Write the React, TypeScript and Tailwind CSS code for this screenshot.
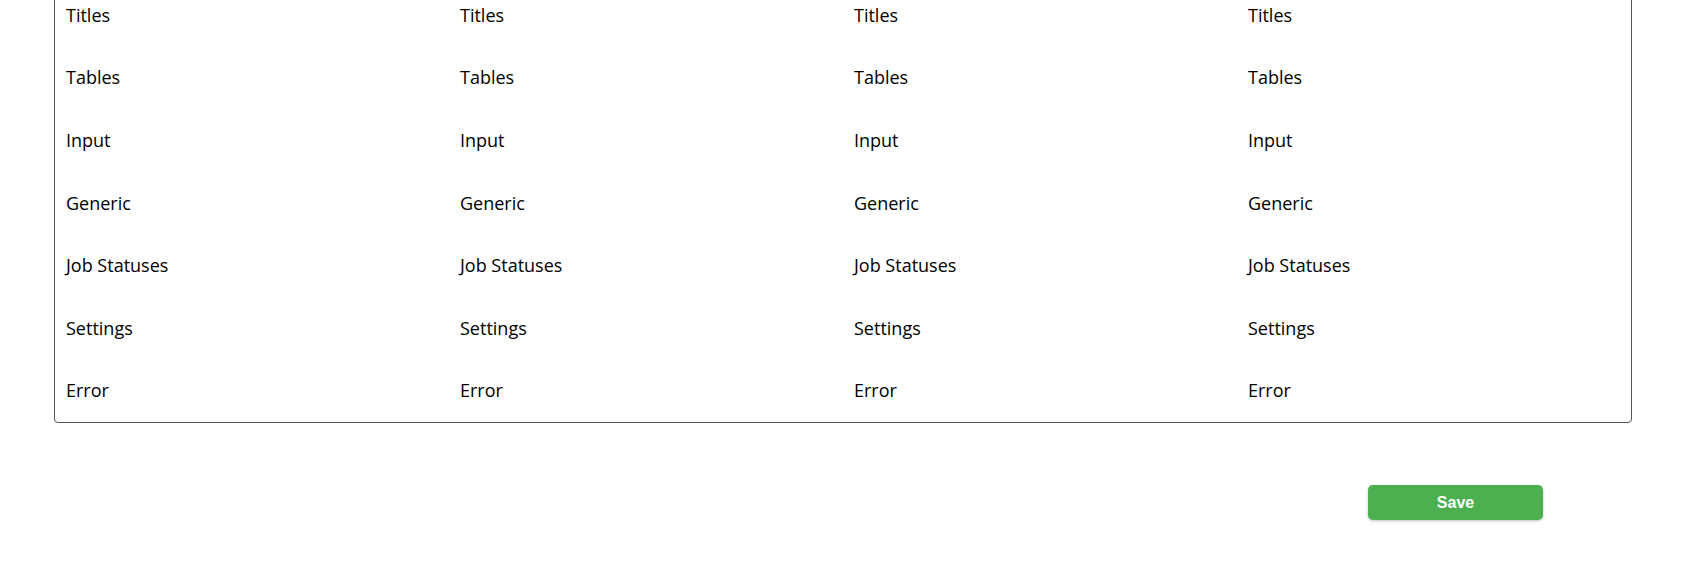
import React from "react";

const rows = ["Titles", "Tables", "Input", "Generic", "Job Statuses", "Settings", "Error"];
const cols = [0, 1, 2, 3];

export default function App() {
  return (
    <div className="w-[1688px] h-[582px] overflow-hidden bg-white" style={{ fontFamily: '"Open Sans", "Noto Sans", sans-serif' }}>
      <div className="ml-[54px] mt-[-17px] w-[1578px] border border-[#555555] rounded-[4px]">
        {rows.map((r) => (
          <div key={r} className="grid grid-cols-4 h-[62.6px]">
            {cols.map((c) => (
              <div key={c} className="flex items-center pl-[11px] text-[18px] text-black leading-[27px]">
                {r}
              </div>
            ))}
          </div>
        ))}
      </div>
      <div className="flex justify-end w-[1632px] pr-[89px] mt-[62px]">
        <button
          className="w-[175px] h-[35px] rounded-[5px] bg-[#4CAF50] text-white font-bold text-[16px] shadow-[0_1px_3px_rgba(0,0,0,0.25)]"
          style={{ fontFamily: '"Liberation Sans", Arial, sans-serif' }}
        >
          Save
        </button>
      </div>
    </div>
  );
}
